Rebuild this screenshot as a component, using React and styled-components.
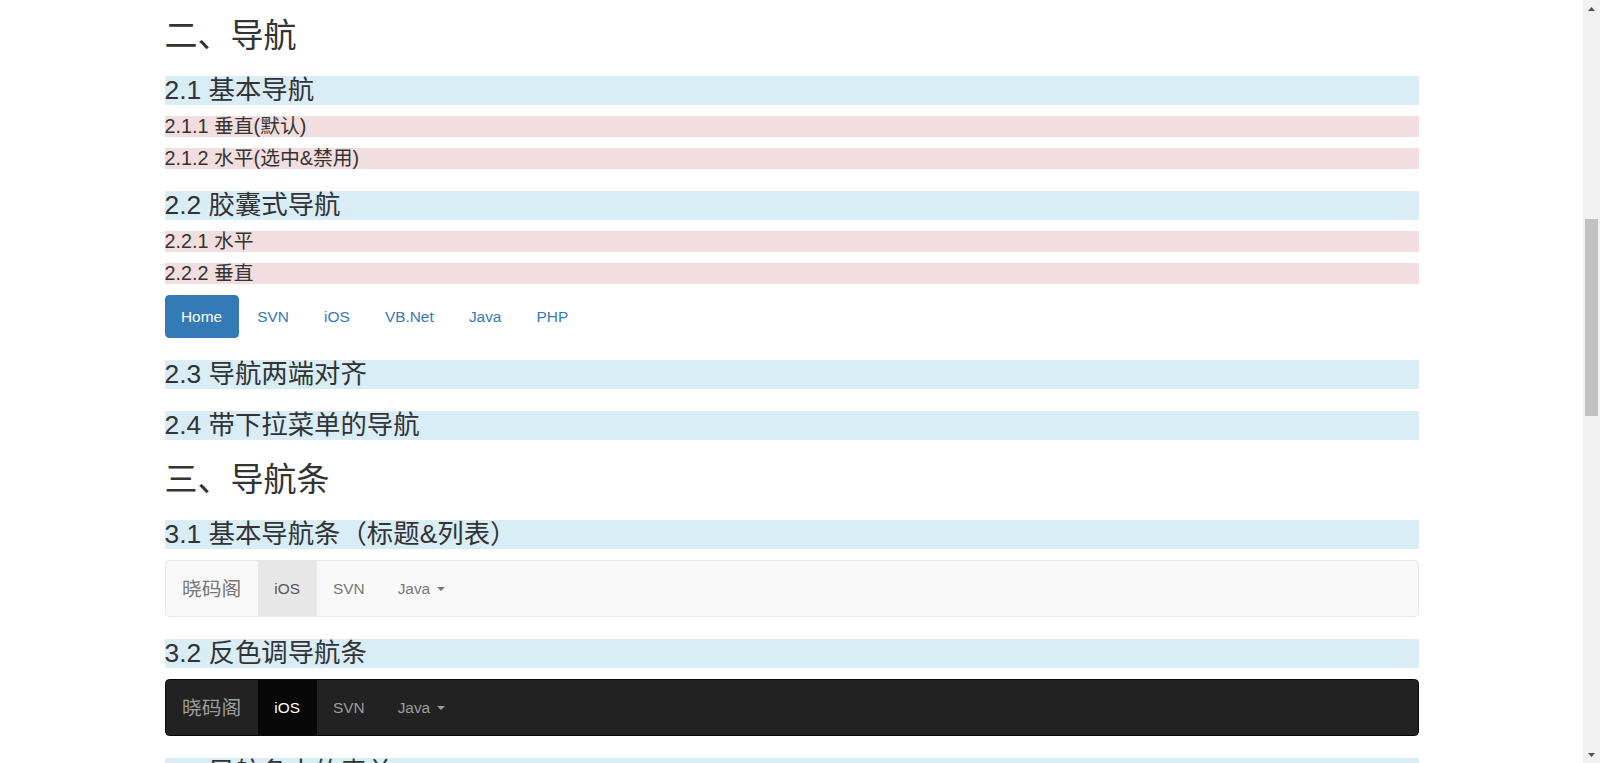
import React from 'react';
import styled, { createGlobalStyle } from 'styled-components';

const GlobalStyle = createGlobalStyle`
  html, body {
    margin: 0;
    padding: 0;
    overflow: hidden;
    background: #fff;
  }
  body {
    font-family: "Liberation Sans", Arial, "Noto Sans CJK SC", sans-serif;
    font-size: 15.4px;
    line-height: 22px;
    color: #333;
  }
  * {
    box-sizing: border-box;
  }
`;

const Page = styled.div`
  display: flex;
  height: 100vh;
`;

const Viewport = styled.div`
  flex: 1;
  overflow: hidden;
`;

const Container = styled.div`
  width: 1254px;
  margin: 0 auto;
`;

const SectionTitle = styled.h2`
  font-size: 33px;
  line-height: 36px;
  font-weight: 400;
  color: #333;
  margin: 22px 0 11px;

  &:first-child {
    margin-top: 18px;
  }
`;

const SubTitle = styled.h3`
  font-size: 26.4px;
  line-height: 29px;
  font-weight: 400;
  color: #333;
  margin: 22px 0 11px;
  background: #d9edf7;
`;

const MinorTitle = styled.h4`
  font-size: 19.8px;
  line-height: 21px;
  font-weight: 400;
  color: #333;
  margin: 11px 0;
  background: #f2dede;
`;

const Pills = styled.ul`
  display: flex;
  gap: 2.2px;
  list-style: none;
  margin: 0;
  padding: 0;
`;

const Pill = styled.li`
  padding: 11px 16.5px;
  line-height: 21px;
  border-radius: 4.4px;
  color: ${(p) => (p.$active ? '#fff' : '#337ab7')};
  background: ${(p) => (p.$active ? '#337ab7' : 'transparent')};
  cursor: pointer;
`;

const themes = {
  light: {
    bg: '#f8f8f8',
    border: '#e7e7e7',
    text: '#777',
    activeBg: '#e7e7e7',
    activeText: '#555',
  },
  dark: {
    bg: '#222',
    border: '#080808',
    text: '#9d9d9d',
    activeBg: '#080808',
    activeText: '#fff',
  },
};

const Navbar = styled.nav`
  display: flex;
  min-height: 57px;
  margin-bottom: 22px;
  border: 1px solid ${(p) => themes[p.$tone].border};
  border-radius: 4.4px;
  background: ${(p) => themes[p.$tone].bg};
  color: ${(p) => themes[p.$tone].text};
`;

const Brand = styled.a`
  height: 55px;
  padding: 16.5px;
  font-size: 19.8px;
  line-height: 22px;
  color: inherit;
  text-decoration: none;
`;

const NavList = styled.ul`
  display: flex;
  list-style: none;
  margin: 0;
  padding: 0;
`;

const NavItem = styled.li`
  padding: 16.5px;
  line-height: 22px;
  color: ${(p) => (p.$active ? themes[p.$tone].activeText : 'inherit')};
  background: ${(p) => (p.$active ? themes[p.$tone].activeBg : 'transparent')};
`;

const Caret = styled.span`
  display: inline-block;
  width: 0;
  height: 0;
  margin-left: 2.2px;
  vertical-align: middle;
  border-top: 4.4px solid;
  border-left: 4.4px solid transparent;
  border-right: 4.4px solid transparent;
`;

const Scrollbar = styled.div`
  width: 17px;
  display: flex;
  flex-direction: column;
  background: #f1f1f1;
`;

const ScrollButton = styled.div`
  height: 17px;
  display: flex;
  align-items: center;
  justify-content: center;
`;

const ScrollThumb = styled.div`
  margin: 202px 2px 0;
  height: 197px;
  background: #c1c1c1;
`;

const ScrollSpacer = styled.div`
  flex: 1;
`;

const Arrow = ({ down }) => (
  <svg width="7" height="4" viewBox="0 0 7 4">
    <polygon points={down ? '0,0 7,0 3.5,4' : '3.5,0 7,4 0,4'} fill="#505050" />
  </svg>
);

const pills = ['Home', 'SVN', 'iOS', 'VB.Net', 'Java', 'PHP'];

const DemoNavbar = ({ tone }) => (
  <Navbar $tone={tone}>
    <Brand href="#">晓码阁</Brand>
    <NavList>
      <NavItem $tone={tone} $active>iOS</NavItem>
      <NavItem $tone={tone}>SVN</NavItem>
      <NavItem $tone={tone}>
        Java <Caret />
      </NavItem>
    </NavList>
  </Navbar>
);

const App = () => (
  <Page>
    <GlobalStyle />
    <Viewport>
      <Container>
        <SectionTitle>二、导航</SectionTitle>
        <SubTitle>2.1 基本导航</SubTitle>
        <MinorTitle>2.1.1 垂直(默认)</MinorTitle>
        <MinorTitle>2.1.2 水平(选中&amp;禁用)</MinorTitle>
        <SubTitle>2.2 胶囊式导航</SubTitle>
        <MinorTitle>2.2.1 水平</MinorTitle>
        <MinorTitle>2.2.2 垂直</MinorTitle>
        <Pills>
          {pills.map((name, i) => (
            <Pill key={name} $active={i === 0}>{name}</Pill>
          ))}
        </Pills>
        <SubTitle>2.3 导航两端对齐</SubTitle>
        <SubTitle>2.4 带下拉菜单的导航</SubTitle>
        <SectionTitle>三、导航条</SectionTitle>
        <SubTitle>3.1 基本导航条（标题&amp;列表）</SubTitle>
        <DemoNavbar tone="light" />
        <SubTitle>3.2 反色调导航条</SubTitle>
        <DemoNavbar tone="dark" />
        <SubTitle>3.3 导航条中的表单</SubTitle>
      </Container>
    </Viewport>
    <Scrollbar>
      <ScrollButton>
        <Arrow />
      </ScrollButton>
      <ScrollThumb />
      <ScrollSpacer />
      <ScrollButton>
        <Arrow down />
      </ScrollButton>
    </Scrollbar>
  </Page>
);

export default App;
